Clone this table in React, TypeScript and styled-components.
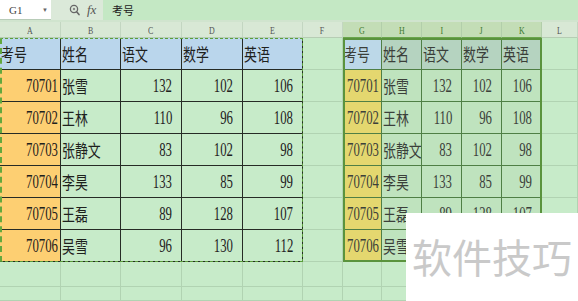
import React from "react";
import styled, { createGlobalStyle, css } from "styled-components";

const GlobalStyle = createGlobalStyle`
  html, body { margin: 0; padding: 0; background: #c7ebc9; }
  body {
    width: 578px; height: 301px; overflow: hidden;
    font-family: "Noto Sans CJK SC", "Noto Sans", sans-serif;
  }
`;

const COLS = [61, 60, 61, 61, 60, 40, 39, 40, 40, 40, 40, 36];
const LETTERS = ["A", "B", "C", "D", "E", "F", "G", "H", "I", "J", "K", "L"];

const Page = styled.div`
  position: relative;
  width: 578px;
  height: 301px;
  overflow: hidden;
  background: #c7ebc9;
`;

const Toolbar = styled.div`
  display: flex;
  height: 20px;
  background: #dbe9d9;
`;

const NameBox = styled.div`
  width: 51px;
  box-sizing: border-box;
  background: #ffffff;
  border-bottom: 1px solid #b8ccb8;
  display: flex;
  align-items: center;
  justify-content: space-between;
  padding: 0 3px 0 9px;
  font-family: "Liberation Serif", serif;
  font-size: 11px;
  color: #444;
`;

const Arrow = styled.span`
  font-size: 6px;
  color: #666;
`;

const IconArea = styled.div`
  width: 52px;
  display: flex;
  align-items: center;
  gap: 7px;
  padding-left: 18px;
  box-sizing: border-box;
`;

const Fx = styled.span`
  font-family: "Liberation Serif", serif;
  font-style: italic;
  font-size: 13px;
  color: #555;
`;

const FormulaInput = styled.div`
  flex: 1;
  background: #c4e8c4;
  display: flex;
  align-items: center;
  padding-left: 9px;
  font-size: 11px;
  color: #222;
`;

const Band = styled.div`
  height: 2px;
  background: #d0e4ce;
`;

const Sheet = styled.div`
  display: grid;
  grid-template-columns: ${COLS.map((c) => `${c}px`).join(" ")};
  grid-template-rows: 16px repeat(7, 32px) 25px 14px;
`;

const ColHead = styled.div<{ $sel?: boolean }>`
  grid-row: 1;
  box-sizing: border-box;
  display: flex;
  align-items: center;
  justify-content: center;
  background: ${(p) => (p.$sel ? "#c3ddb6" : "#d8e8d5")};
  border-right: 1px solid ${(p) => (p.$sel ? "#b2ceaa" : "#c3d6c1")};
  border-bottom: 1px solid ${(p) => (p.$sel ? "#6aa64c" : "#b6cdb4")};
  font-family: "Liberation Serif", serif;
  font-size: 11px;
  color: ${(p) => (p.$sel ? "#3f7a2f" : "#555")};
  span { display: inline-block; transform: scaleX(0.72); }
`;

type Fill = "bg" | "blue" | "orange" | "yellow" | "selBlue" | "selHead" | "selData";
const FILLS: Record<Fill, string> = {
  bg: "#c7ebc9",
  blue: "#bad6ec",
  orange: "#fdcf72",
  yellow: "#e4d76f",
  selBlue: "#bcd8e8",
  selHead: "#b5d3c0",
  selData: "#bfe3be",
};
type Line = "grid" | "dark" | "green";
const LINES: Record<Line, string> = {
  grid: "#b1d3b2",
  dark: "#262b25",
  green: "#4f7f45",
};

const Cell = styled.div<{
  $r: number;
  $c: number;
  $fill: Fill;
  $line: Line;
  $num?: boolean;
  $pad?: number;
  $muted?: boolean;
}>`
  grid-row: ${(p) => p.$r};
  grid-column: ${(p) => p.$c};
  box-sizing: border-box;
  display: flex;
  align-items: center;
  overflow: hidden;
  background: ${(p) => FILLS[p.$fill]};
  border-right: 1px solid ${(p) => LINES[p.$line]};
  border-bottom: 1px solid ${(p) => LINES[p.$line]};
  color: ${(p) => (p.$muted ? "#3b3f3a" : "#1e211d")};
  ${(p) =>
    p.$num
      ? css`
          justify-content: flex-end;
          padding-right: ${p.$pad ?? 9}px;
        `
      : css`
          justify-content: flex-start;
          padding-left: 1px;
        `}
`;

const NumText = styled.span`
  display: inline-block;
  font-family: "Liberation Serif", serif;
  font-size: 18px;
  transform: scaleX(0.71);
  transform-origin: right center;
  white-space: nowrap;
  margin-top: 2px;
`;

const CnText = styled.span`
  display: inline-block;
  font-family: "Noto Sans CJK SC", sans-serif;
  font-size: 17px;
  transform: scaleX(0.76);
  transform-origin: left center;
  white-space: nowrap;
`;

const Marquee = styled.div`
  grid-column: 1 / 6;
  grid-row: 2 / 9;
  box-sizing: border-box;
  border: 1px dashed #5a9e3a;
  border-left: 2px dashed #62a83e;
  pointer-events: none;
  z-index: 2;
`;

const Selection = styled.div`
  grid-column: 7 / 12;
  grid-row: 2 / 9;
  box-sizing: border-box;
  border: 2px solid #5a933d;
  pointer-events: none;
  z-index: 2;
`;

const Watermark = styled.div`
  position: absolute;
  right: 0;
  bottom: 0;
  width: 172px;
  height: 88px;
  background: #ffffff;
  display: flex;
  align-items: center;
  justify-content: center;
  padding-bottom: 2px;
  box-sizing: border-box;
  font-family: "Noto Sans CJK SC", sans-serif;
  font-size: 40px;
  color: #c9c9c9;
  z-index: 5;
`;

const HEAD = ["考号", "姓名", "语文", "数学", "英语"];
const ROWS: [string, string, number, number, number][] = [
  ["70701", "张雪", 132, 102, 106],
  ["70702", "王林", 110, 96, 108],
  ["70703", "张静文", 83, 102, 98],
  ["70704", "李昊", 133, 85, 99],
  ["70705", "王磊", 89, 128, 107],
  ["70706", "吴雪", 96, 130, 112],
];

function Magnifier() {
  return (
    <svg width="11" height="12" viewBox="0 0 11 12">
      <circle cx="5" cy="5" r="3.6" fill="none" stroke="#666" strokeWidth="1.3" />
      <circle cx="5" cy="5" r="1.2" fill="#888" />
      <path d="M7.6 7.8 L10 10.6" stroke="#666" strokeWidth="1.6" strokeLinecap="round" />
    </svg>
  );
}

function renderTableRow(
  r: number,
  row: [string, string, number, number, number] | null,
  right: boolean
) {
  const line: Line = right ? "green" : "dark";
  const gridRow = r + 2;
  const base = right ? 7 : 1;
  const cells: React.ReactNode[] = [];
  for (let c = 0; c < 5; c++) {
    const key = `${right ? "r" : "l"}-${r}-${c}`;
    const col = base + c;
    if (!row) {
      const fill: Fill = right ? (c === 0 ? "selBlue" : "selHead") : "blue";
      cells.push(
        <Cell key={key} $r={gridRow} $c={col} $fill={fill} $line={line} $muted={right}>
          <CnText>{HEAD[c]}</CnText>
        </Cell>
      );
    } else if (c === 0) {
      cells.push(
        <Cell
          key={key}
          $r={gridRow}
          $c={col}
          $fill={right ? "yellow" : "orange"}
          $line={line}
          $num
          $pad={2}
          $muted={right}
        >
          <NumText>{row[0]}</NumText>
        </Cell>
      );
    } else if (c === 1) {
      cells.push(
        <Cell key={key} $r={gridRow} $c={col} $fill={right ? "selData" : "bg"} $line={line} $muted={right}>
          <CnText>{row[1]}</CnText>
        </Cell>
      );
    } else {
      cells.push(
        <Cell
          key={key}
          $r={gridRow}
          $c={col}
          $fill={right ? "selData" : "bg"}
          $line={line}
          $num
          $muted={right}
        >
          <NumText>{row[c]}</NumText>
        </Cell>
      );
    }
  }
  return cells;
}

export default function App() {
  const body: React.ReactNode[] = [];
  for (let r = 0; r < 7; r++) {
    const row = r === 0 ? null : ROWS[r - 1];
    body.push(...renderTableRow(r, row, false));
    body.push(<Cell key={`f-${r}`} $r={r + 2} $c={6} $fill="bg" $line="grid" />);
    body.push(...renderTableRow(r, row, true));
    body.push(<Cell key={`lcol-${r}`} $r={r + 2} $c={12} $fill="bg" $line="grid" />);
  }
  for (let r = 7; r < 9; r++) {
    for (let c = 0; c < 12; c++) {
      body.push(<Cell key={`e-${r}-${c}`} $r={r + 2} $c={c + 1} $fill="bg" $line="grid" />);
    }
  }

  return (
    <Page>
      <GlobalStyle />
      <Toolbar>
        <NameBox>
          <span>G1</span>
          <Arrow>▼</Arrow>
        </NameBox>
        <IconArea>
          <Magnifier />
          <Fx>fx</Fx>
        </IconArea>
        <FormulaInput>考号</FormulaInput>
      </Toolbar>
      <Band />
      <Sheet>
        {LETTERS.map((l, i) => (
          <ColHead key={l} $sel={i >= 6 && i <= 10}>
            <span>{l}</span>
          </ColHead>
        ))}
        {body}
        <Marquee />
        <Selection />
      </Sheet>
      <Watermark>软件技巧</Watermark>
    </Page>
  );
}
